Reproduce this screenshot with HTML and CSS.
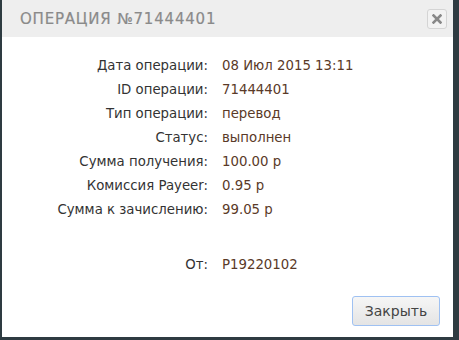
FILE: index.html
```html
<!DOCTYPE html>
<html>
<head>
<meta charset="utf-8">
<link rel="stylesheet" href="styles.css">
</head>
<body>
<div class="dialog">
  <div class="header">
    <span class="title">ОПЕРАЦИЯ №71444401</span>
    <button class="close" aria-label="close">
      <svg width="10" height="10" viewBox="0 0 10 10"><path d="M1.5 1.5 L8.5 8.5 M8.5 1.5 L1.5 8.5" stroke="#888" stroke-width="2.6" stroke-linecap="square"/></svg>
    </button>
  </div>
  <div class="content">
    <div class="rows">
      <div class="label">Дата операции:</div><div class="value">08 Июл 2015 13:11</div>
      <div class="label">ID операции:</div><div class="value">71444401</div>
      <div class="label">Тип операции:</div><div class="value">перевод</div>
      <div class="label">Статус:</div><div class="value">выполнен</div>
      <div class="label">Сумма получения:</div><div class="value">100.00 р</div>
      <div class="label">Комиссия Payeer:</div><div class="value">0.95 р</div>
      <div class="label">Сумма к зачислению:</div><div class="value">99.05 р</div>
      <div class="label spacer"></div><div class="value spacer"></div>
      <div class="label from">От:</div><div class="value from">P19220102</div>
    </div>
  </div>
  <div class="footer">
    <button class="btn">Закрыть</button>
  </div>
</div>
</body>
</html>
```
FILE: styles.css
```css
html, body {
  margin: 0;
  padding: 0;
}
body {
  background: #2e3b41;
  width: 459px;
  height: 340px;
  padding: 0 6px 3px 2px;
  box-sizing: border-box;
}
.dialog {
  width: 451px;
  height: 337px;
  background: #fff;
  display: flex;
  flex-direction: column;
}
.header {
  height: 37px;
  background: #eeeeee;
  display: flex;
  align-items: center;
  justify-content: space-between;
  padding: 0 6px 0 18px;
  box-sizing: border-box;
}
.title {
  font-family: "DejaVu Sans", sans-serif;
  font-size: 15px;
  letter-spacing: 0.8px;
  color: #8a8a8a;
  padding-top: 1px;
  -webkit-text-stroke: 0.2px #8a8a8a;
}
.close {
  width: 20px;
  height: 20px;
  padding: 0;
  border: 1px solid #d4d4d4;
  border-radius: 3px;
  background: #f2f2f2;
  display: flex;
  align-items: center;
  justify-content: center;
}
.content {
  flex: 1;
  padding-top: 17px;
}
.rows {
  display: grid;
  grid-template-columns: 206px auto;
  column-gap: 14px;
  grid-auto-rows: 24px;
  font-family: "DejaVu Sans", sans-serif;
  font-size: 13.3px;
  line-height: 24px;
}
.label {
  text-align: right;
  color: #333;
}
.value {
  color: #5a3a28;
}
.from {
  margin-top: 7px;
}
.footer {
  display: flex;
  justify-content: flex-end;
  padding: 0 13px 11px 0;
}
.btn {
  width: 88px;
  height: 30px;
  border: 1px solid #9fc1f2;
  border-radius: 3px;
  background: linear-gradient(#f6f6f6, #e4e4e4);
  font-family: "DejaVu Sans", sans-serif;
  font-size: 14px;
  color: #444;
  padding: 0;
}
```
